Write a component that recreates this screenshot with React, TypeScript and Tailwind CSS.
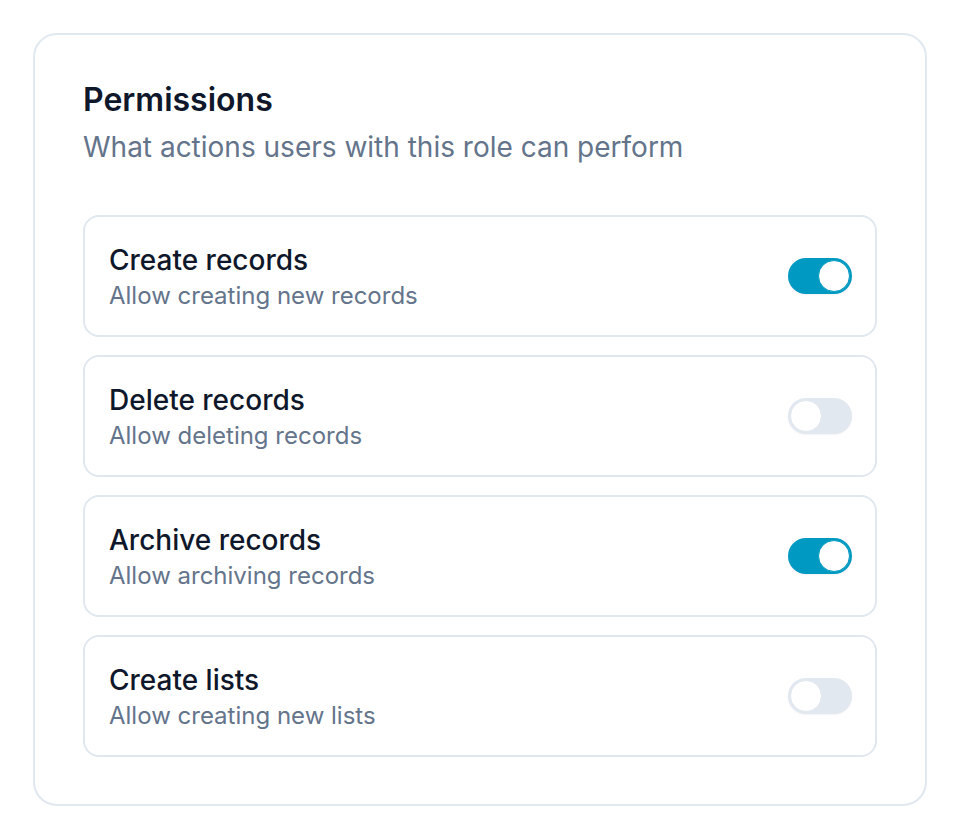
import React, { useState } from "react";

const items = [
  { title: "Create records", desc: "Allow creating new records", on: true },
  { title: "Delete records", desc: "Allow deleting records", on: false },
  { title: "Archive records", desc: "Allow archiving records", on: true },
  { title: "Create lists", desc: "Allow creating new lists", on: false },
];

function Toggle({ on, onClick }: { on: boolean; onClick: () => void }) {
  return (
    <button
      onClick={onClick}
      className={
        "relative flex h-[36px] w-[64px] shrink-0 items-center rounded-full p-[2px] shadow-[0_1px_2px_rgba(15,23,42,0.05)] " +
        (on ? "bg-[#0099c1] justify-end" : "bg-[#e2e8f0] justify-start")
      }
    >
      <span
        className={
          "block h-[32px] w-[32px] rounded-full bg-white border " +
          (on ? "border-[#0099c1]" : "border-[#e2e8f0]")
        }
      />
    </button>
  );
}

export default function App() {
  const [state, setState] = useState(items.map((i) => i.on));
  return (
    <div
      className="min-h-[840px] w-[960px] bg-white p-[33px]"
      style={{ fontFamily: "Inter, 'Noto Sans', sans-serif" }}
    >
      <div className="w-[894px] rounded-[24px] border-2 border-[#e2e8f0] bg-white px-[48px] pt-[47px] pb-[47px]">
        <h2 className="text-[32px] leading-[36px] font-semibold text-[#0f172a]">
          Permissions
        </h2>
        <p className="mt-[9px] text-[28px] leading-[40px] text-[#64748b]">
          What actions users with this role can perform
        </p>
        <div className="mt-[48px] flex flex-col gap-[18px]">
          {items.map((it, i) => (
            <div
              key={it.title}
              className="flex h-[122px] items-center justify-between rounded-[16px] border-2 border-[#e2e8f0] pl-[24px] pr-[23px]"
            >
              <div className="flex flex-col">
                <div className="text-[28px] leading-[40px] font-medium text-[#0f172a]">
                  {it.title}
                </div>
                <div className="text-[24px] leading-[32px] text-[#64748b]">
                  {it.desc}
                </div>
              </div>
              <Toggle
                on={state[i]}
                onClick={() =>
                  setState((s) => s.map((v, j) => (j === i ? !v : v)))
                }
              />
            </div>
          ))}
        </div>
      </div>
    </div>
  );
}
